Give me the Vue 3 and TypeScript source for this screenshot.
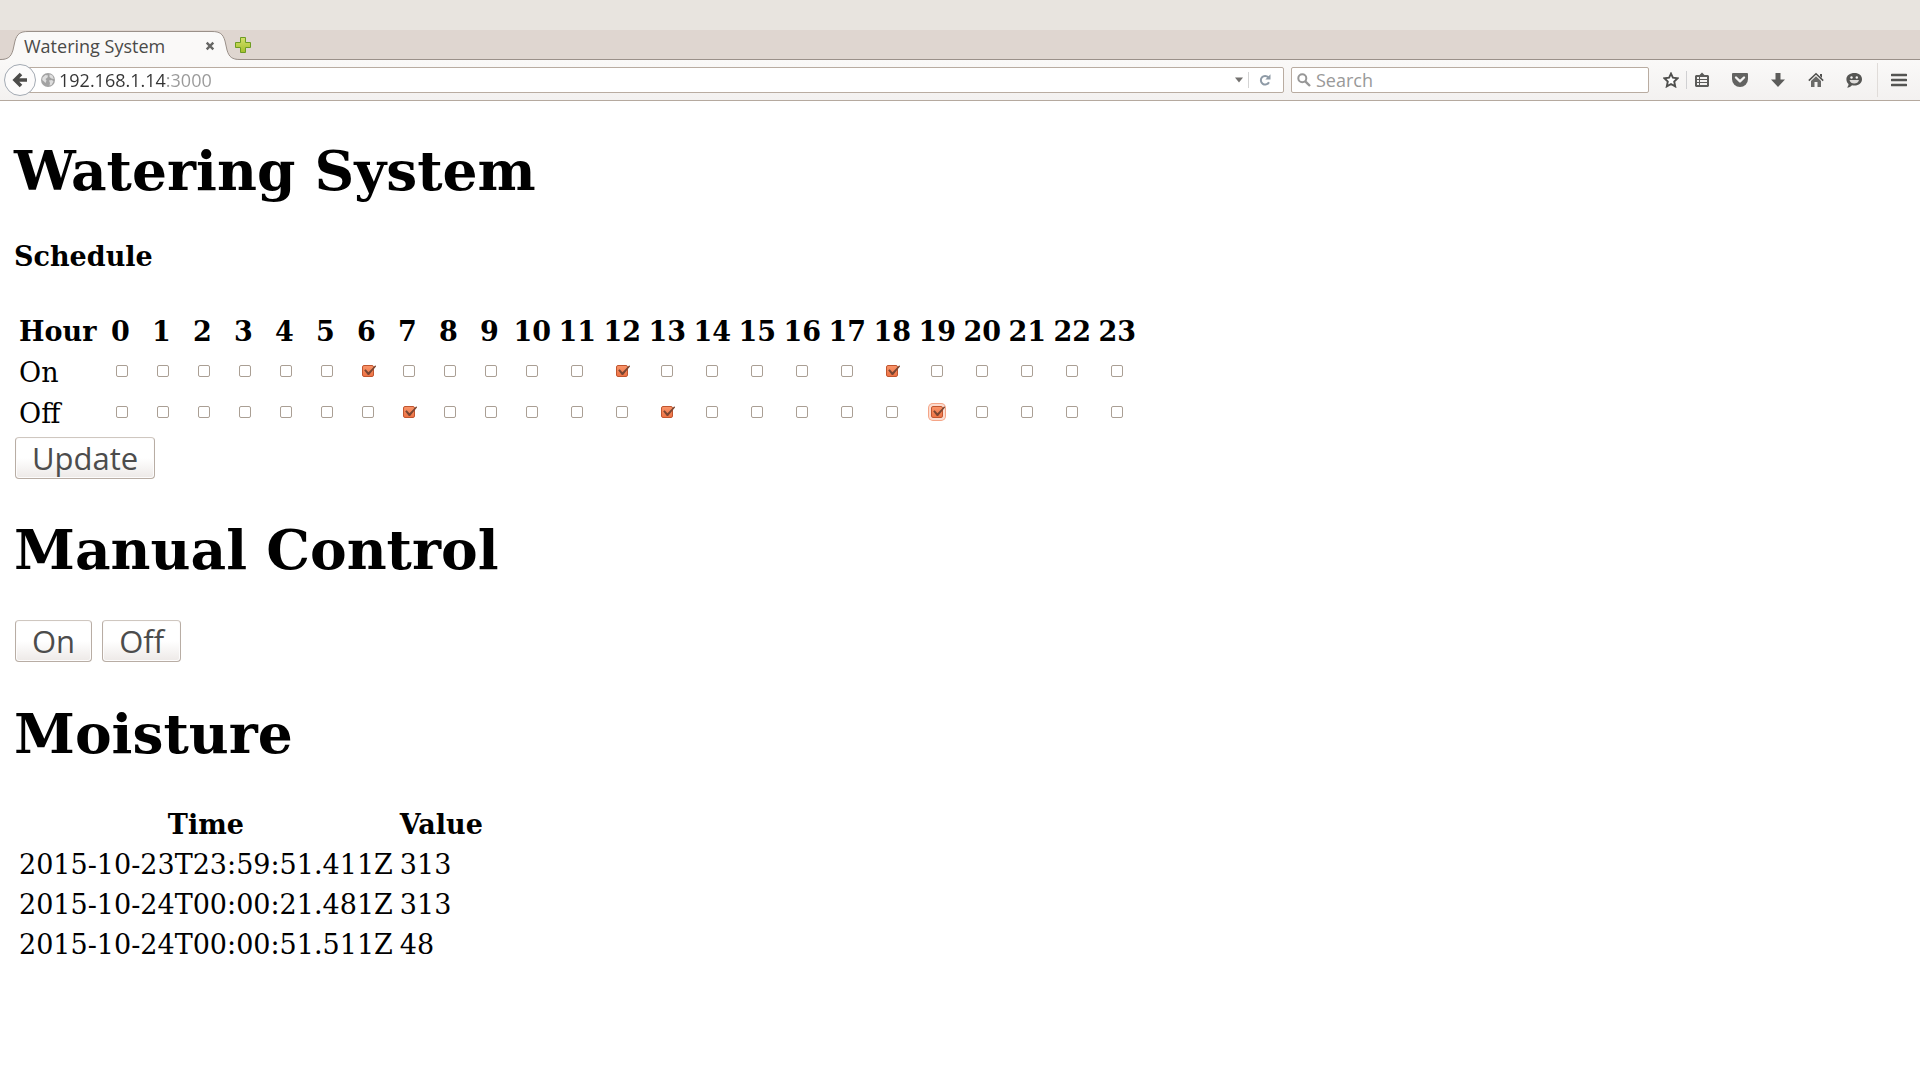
<script setup lang="ts">
import { reactive, ref } from 'vue'

interface ScheduleRow {
  key: string
  label: string
  hours: boolean[]
}

interface Reading {
  time: string
  value: number
}

const hours: number[] = Array.from({ length: 24 }, (_, i) => i)

function hoursOf(active: number[]): boolean[] {
  return hours.map((h) => active.includes(h))
}

const schedule = reactive<ScheduleRow[]>([
  { key: 'on', label: 'On', hours: hoursOf([6, 12, 18]) },
  { key: 'off', label: 'Off', hours: hoursOf([7, 13, 19]) },
])

const focused = ref('off-19')

const readings: Reading[] = [
  { time: '2015-10-23T23:59:51.411Z', value: 313 },
  { time: '2015-10-24T00:00:21.481Z', value: 313 },
  { time: '2015-10-24T00:00:51.511Z', value: 48 },
]

const address = ref('192.168.1.14:3000')
const query = ref('')
</script>

<template>
  <div class="browser">
    <header class="chrome">
      <div class="titlebar"></div>

      <div class="tabs">
        <div class="tab">
          <svg class="tab-shape" viewBox="0 0 240 30" width="240" height="30" aria-hidden="true">
            <path d="M0 29.5C8 29.5 11 27 13 20L15 11C17 4 20 1.500 28 1.500H212C220 1.500 223 4 225 11L227 20C229 27 232 29.500 240 29.500V30H0Z" fill="#faf9f8" />
            <path d="M0 29.5C8 29.5 11 27 13 20L15 11C17 4 20 1.500 28 1.500H212C220 1.500 223 4 225 11L227 20C229 27 232 29.500 240 29.500" fill="none" stroke="#9a9089" />
          </svg>
          <span class="tab-title">Watering System</span>
          <button class="tab-close" type="button" aria-label="Close tab">
            <svg viewBox="0 0 10 10" width="10" height="10"><path d="M1.700 1.700L8.300 8.300M8.300 1.700L1.700 8.300" stroke="#666664" stroke-width="2.400" /></svg>
          </button>
        </div>
        <button class="tab-new" type="button" aria-label="New tab">
          <svg viewBox="0 0 16 16" width="16" height="16">
            <defs>
              <linearGradient id="plus" x1="0" y1="0" x2="0" y2="1">
                <stop offset="0" stop-color="#d3e06a" />
                <stop offset="1" stop-color="#a3c02c" />
              </linearGradient>
            </defs>
            <path d="M5.500 .5H10.500V5.500H15.500V10.500H10.500V15.500H5.500V10.500H.5V5.500H5.500Z" fill="url(#plus)" stroke="#6d9c22" />
          </svg>
        </button>
      </div>

      <div class="toolbar">
        <button class="back" type="button" aria-label="Back">
          <svg viewBox="0 0 16 16" width="16" height="16"><path d="M15 8H4M9 2L3 8L9 14" fill="none" stroke="#4c4c4a" stroke-width="3.600" /></svg>
        </button>
        <div class="urlbar">
          <svg class="globe" viewBox="0 0 14 14" width="14" height="14" aria-hidden="true">
            <circle cx="7" cy="7" r="7" fill="#a3a3a3" />
            <path d="M1.500 4.500L4.500 2L7 2.500L6.500 4.500L4.500 6L5.500 7.500L4.500 10L3 8.500L1.200 7ZM8.500 1.200L11.500 2.600L12.800 6L10.500 5.500L8.500 4ZM8 7.500L11 7L12.500 8.500L10.500 12L8.500 12.500L9 10Z" fill="#dedede" />
          </svg>
          <input v-model="address" class="address" type="text" aria-label="Address" />
          <button class="history" type="button" aria-label="Show history">
            <svg viewBox="0 0 8 6" width="8" height="6"><path d="M0 .5H8L4 5.500Z" fill="#73716f" /></svg>
          </button>
          <button class="reload" type="button" aria-label="Reload">
            <svg viewBox="0 0 12 12" width="12" height="12">
              <path d="M9.300 3.300A4.300 4.300 0 1 0 10 8.200" fill="none" stroke="#8e9aa6" stroke-width="2" />
              <path d="M11.500 .3V5.500H6.300Z" fill="#8e9aa6" />
            </svg>
          </button>
        </div>
        <div class="searchbar">
          <svg viewBox="0 0 14 14" width="14" height="14" aria-hidden="true">
            <circle cx="5.300" cy="5.300" r="4" fill="none" stroke="#979797" stroke-width="2" />
            <path d="M8.300 8.300L13 13" stroke="#979797" stroke-width="2.400" />
          </svg>
          <input v-model="query" class="query" type="text" placeholder="Search" aria-label="Search" />
        </div>
        <nav class="actions">
          <button type="button" aria-label="Bookmark this page">
            <svg viewBox="0 0 16 16" width="16" height="16"><path d="M8 1.600L9.900 5.600L14.600 6.200L11.200 9.500L12.200 14.400L8 12L3.800 14.400L4.800 9.500L1.400 6.200L6.100 5.600Z" fill="#fff" stroke="#4f4f4d" stroke-width="1.900" /></svg>
          </button>
          <span class="rule"></span>
          <button type="button" aria-label="Bookmarks">
            <svg viewBox="0 0 16 16" width="16" height="16">
              <path d="M2 3H5.500L8 .5L10.500 3H14L15 4V14L14 15H2L1 14V4Z" fill="#5c5c5a" />
              <path d="M3 5H5V7H3ZM6 5H13V7H6ZM3 8H5V10H3ZM6 8H13V10H6ZM3 11H5V13H3ZM6 11H13V13H6Z" fill="#f4f2f1" />
            </svg>
          </button>
          <button type="button" aria-label="Save to Pocket">
            <svg viewBox="0 0 16 16" width="16" height="16">
              <path d="M1 1H15Q16 1 16 2V7A8 8 0 0 1 0 7V2Q0 1 1 1Z" fill="#636361" />
              <path d="M4 5.500L8 9.300L12 5.500" fill="none" stroke="#f6f5f4" stroke-width="2.400" stroke-linecap="round" stroke-linejoin="round" />
            </svg>
          </button>
          <button type="button" aria-label="Downloads">
            <svg viewBox="0 0 16 16" width="16" height="16"><path d="M5.500 1H10.500V7.500H15L8 15L1 7.500H5.500Z" fill="#5c5c5a" /></svg>
          </button>
          <button type="button" aria-label="Home">
            <svg viewBox="0 0 16 16" width="16" height="16">
              <path d="M.8 8.600L8 1.700L15.200 8.600" fill="none" stroke="#50504e" stroke-width="1.500" />
              <path d="M12 2H14V6L12 4Z" fill="#50504e" />
              <path d="M3 9L8 4.200L13 9V15H9.500V10H6.500V15H3Z" fill="#6a6a68" />
            </svg>
          </button>
          <button type="button" aria-label="Start a conversation">
            <svg viewBox="0 0 16 16" width="16" height="16">
              <path d="M8.500 1C13 1 16 3.500 16 7.200S13 13.500 8.500 13.500C7.500 13.500 6.700 13.400 6 13.200C4.800 14.600 3 15.500 1 15.500C2 14.500 2.600 13.300 2.500 12C1 10.700 .4 9 .4 7.200C.4 3.500 4 1 8.500 1Z" fill="#565654" />
              <circle cx="5.500" cy="5.500" r="1.200" fill="#f4f2f1" />
              <circle cx="10.800" cy="5.500" r="1.200" fill="#f4f2f1" />
              <path d="M3.500 8H13C12.500 10.500 10.500 11.500 8.200 11.500S4 10.500 3.500 8Z" fill="#dedcda" />
            </svg>
          </button>
          <span class="rule tall"></span>
          <button type="button" aria-label="Open menu">
            <svg viewBox="0 0 16 14" width="16" height="14"><path d="M1 2H15M1 7H15M1 12H15" stroke="#545452" stroke-width="2.600" stroke-linecap="round" /></svg>
          </button>
        </nav>
      </div>
    </header>

    <main class="page">
      <h1>Watering System</h1>
      <h4>Schedule</h4>
      <form @submit.prevent>
        <table class="schedule">
          <thead>
            <tr>
              <th scope="col">Hour</th>
              <th v-for="h in hours" :key="h" scope="col" :class="{ double: h > 9 }">{{ h }}</th>
            </tr>
          </thead>
          <tbody>
            <tr v-for="row in schedule" :key="row.key">
              <td>{{ row.label }}</td>
              <td v-for="h in hours" :key="h" class="tick">
                <input
                  v-model="row.hours[h]"
                  type="checkbox"
                  :class="{ focused: focused === `${row.key}-${h}` }"
                  :aria-label="`${row.label} at hour ${h}`"
                  @focus="focused = `${row.key}-${h}`"
                />
              </td>
            </tr>
          </tbody>
        </table>
        <div class="controls">
          <button class="push" type="submit">Update</button>
        </div>
      </form>

      <h1>Manual Control</h1>
      <div class="controls">
        <button class="push" type="button">On</button>
        <button class="push" type="button">Off</button>
      </div>

      <h1>Moisture</h1>
      <table>
        <thead>
          <tr>
            <th scope="col">Time</th>
            <th scope="col">Value</th>
          </tr>
        </thead>
        <tbody>
          <tr v-for="r in readings" :key="r.time">
            <td>{{ r.time }}</td>
            <td>{{ r.value }}</td>
          </tr>
        </tbody>
      </table>
    </main>
  </div>
</template>

<style>
body {
  background: #fff;
}
</style>

<style scoped>
.browser {
  color: #000;
}

.chrome {
  font-family: "Open Sans", "Noto Sans", sans-serif;
  font-size: 18px;
  color: #4a4a48;
}

.chrome button {
  display: flex;
  align-items: center;
  justify-content: center;
  padding: 0;
  border: 0;
  background: none;
}

.chrome svg {
  display: block;
  flex: none;
}

.chrome input {
  min-width: 0;
  padding: 0;
  border: 0;
  outline: 0;
  background: none;
  font: inherit;
}

.titlebar {
  height: 30px;
  background: #e8e4df;
}

.tabs {
  display: flex;
  height: 30px;
  background: linear-gradient(#dfd6d0 29px, #9a9089 29px);
}

.tab {
  position: relative;
  display: flex;
  align-items: center;
  justify-content: space-between;
  box-sizing: border-box;
  width: 240px;
  padding: 2px 25px 0 24px;
}

.tab-shape {
  position: absolute;
  inset: 0;
}

.tab-title,
.tab-close {
  position: relative;
}

.tab-title {
  line-height: 26px;
}

.tab-new {
  width: 16px;
  margin-left: -5px;
  padding-top: 2px;
}

.toolbar {
  display: flex;
  align-items: center;
  height: 40px;
  border-bottom: 1px solid #b5a99f;
  background: linear-gradient(#faf9f8, #f3f1f0);
}

.chrome .back {
  position: relative;
  z-index: 1;
  box-sizing: border-box;
  width: 32px;
  height: 32px;
  margin-left: 4px;
  border: 1px solid #a3aab3;
  border-radius: 50%;
  background: #fcfbfb;
}

.urlbar,
.searchbar {
  display: flex;
  align-items: center;
  box-sizing: border-box;
  height: 26px;
  border: 1px solid #b9aca1;
  border-radius: 2px;
  background: #fff;
}

.urlbar {
  flex: 1;
  margin-left: -16px;
  padding-left: 20px;
}

.chrome .address {
  flex: 1;
  height: 24px;
  margin-left: 4px;
  background: linear-gradient(to right, #333 107px, #999 107px);
  background-clip: text;
  -webkit-text-fill-color: transparent;
}

.history {
  width: 18px;
  height: 16px;
}

.chrome .reload {
  box-sizing: border-box;
  width: 35px;
  height: 16px;
  padding-right: 2px;
  border-left: 1px solid #d4d4d4;
}

.searchbar {
  width: 358px;
  margin-left: 7px;
  padding: 0 5px;
  gap: 5px;
}

.query {
  flex: 1;
  height: 24px;
}

.query::placeholder {
  color: #999;
  opacity: 1;
}

.actions {
  display: flex;
  align-items: center;
  margin: 0 13px 0 14px;
}

.actions button {
  width: 16px;
  height: 32px;
  margin-right: 22px;
}

.actions button:first-child {
  margin-right: 7px;
}

.actions button:last-child {
  margin-right: 0;
}

.rule {
  width: 1px;
  height: 18px;
  margin-right: 7px;
  background: #d0d0d2;
}

.rule.tall {
  height: 34px;
  margin: 0 13px 0 -7px;
  background: #e0dcd9;
}

.page {
  display: flow-root;
  padding: 0 14px 14px;
  font: 27px/33px "DejaVu Serif", serif;
}

h1 {
  margin: 37px 0;
  font-size: 55px;
  line-height: 65px;
}

h4 {
  margin: 37px 0;
  font-size: 27px;
}

table {
  border-spacing: 3px;
}

th,
td {
  padding: 2px;
}

th {
  text-align: center;
}

td {
  text-align: left;
}

.schedule td {
  padding: 3px 2px 1px;
  line-height: 34px;
}

.double {
  width: 38px;
}

.schedule .tick {
  padding: 2px;
  line-height: 0;
}

.tick input {
  appearance: none;
  box-sizing: border-box;
  width: 12px;
  height: 12px;
  margin: 0 9px 2px 13px;
  border: 1px solid #aa9f94;
  border-radius: 2px;
  outline: 0;
  background: #fff;
}

.tick input:checked {
  position: relative;
  border-color: #c0552f;
  background: linear-gradient(#f99368, #ee7446);
}

.tick input:checked::after {
  content: "";
  position: absolute;
  top: -1px;
  left: 0;
  width: 13px;
  height: 11px;
  background: #7a4632;
  clip-path: polygon(6% 48%, 18% 38%, 39% 66%, 90% 4%, 100% 8%, 44% 92%, 34% 92%);
}

.tick input.focused {
  box-shadow: 0 0 0 2px #fcdcd0, 0 0 0 3px #f5a587;
}

.push {
  height: 42px;
  margin: 0;
  padding: 0 16px;
  border: 1px solid #b8ada4;
  border-top-color: #cfc7c0;
  border-radius: 4px;
  background: linear-gradient(#fff 50%, #ede9e7);
  box-shadow: inset 0 0 0 1px #fdfcfc;
  color: #4c4c4c;
  font: 31px/38px "Open Sans", "Noto Sans", sans-serif;
}

.controls {
  display: flex;
  gap: 10px;
  padding: 1px 1px 2px;
}

form .controls {
  padding: 2px 1px 1px;
}
</style>
